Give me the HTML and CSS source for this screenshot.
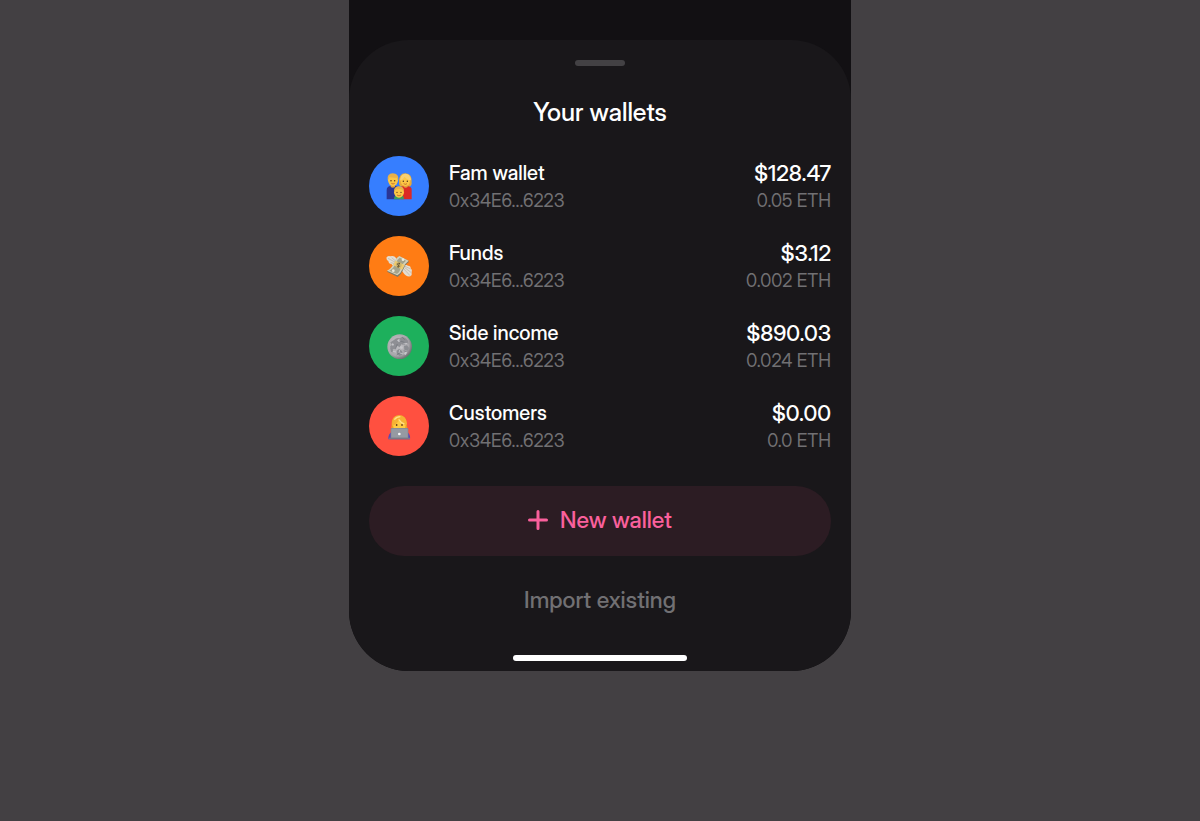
FILE: index.html
```html
<!DOCTYPE html>
<html lang="en">
<head>
    <meta charset="UTF-8">
    <meta name="viewport" content="width=device-width, initial-scale=1.0">
    <title>Your wallets</title>
    <link rel="stylesheet" href="styles.css">
</head>

<body>

    <main class="phone">
        <section class="sheet">
            <div class="handle"></div>
            <h1>Your wallets</h1>

            <!-- Wallet list -->
            <ul class="wallets">
                <li class="wallet">
                    <!-- Family -->
                    <svg class="avatar blue" viewBox="15 17 180 180" aria-hidden="true">
                        <path d="M68 147v-28q0-11 12-12h14q12 1 12 12v28z" fill="#2b3594"/>
                        <path d="M106 147v-28q0-11 12-12h13q12 1 12 12v28z" fill="#dc2a24"/>
                        <path d="M80 100h13v10q-6 5-13 0zM119 100h12v10q-6 5-12 0z" fill="#e5a23a"/>
                        <path d="M105 98q-2-29 19-29 22 0 19 32-2 9-9 7h-19q-10 1-10-10z" fill="#e6a93a"/>
                        <ellipse cx="87" cy="90" rx="15" ry="17" fill="#fcc646"/>
                        <ellipse cx="124" cy="92" rx="14" ry="15" fill="#fcc646"/>
                        <path d="M71 90q-3-20 15-21 19 0 17 21-3-3-4-8-12 1-23-1-3 4-5 9z" fill="#e8b04a"/>
                        <path d="M108 91q1-21 16-21 16 0 17 20-12-1-19-11-4 9-14 12z" fill="#f7d074"/>
                        <g fill="#51321b">
                            <circle cx="81" cy="91" r="2.2"/>
                            <circle cx="92" cy="91" r="2.2"/>
                            <circle cx="118" cy="93" r="2.2"/>
                            <circle cx="130" cy="93" r="2.2"/>
                        </g>
                        <path d="M82 99q5 4 10 0M119 100q5 4 10 0" fill="none" stroke="#b04b26" stroke-width="2"/>
                        <path d="M90 147q0-12 9-12h13q8 1 8 12z" fill="#3d9b62"/>
                        <ellipse cx="105" cy="126" rx="15" ry="16" fill="#fcc646"/>
                        <path d="M90 122q0-14 15-14t15 14q-7-6-15-6t-15 6z" fill="#e8b04a"/>
                        <g fill="#51321b">
                            <circle cx="99" cy="126" r="2"/>
                            <circle cx="111" cy="126" r="2"/>
                        </g>
                        <path d="M99 134q6 5 12 0" fill="none" stroke="#b04b26" stroke-width="2"/>
                    </svg>
                    <div class="details">
                        <span class="name">Fam wallet</span>
                        <span class="sub">0x34E6...6223</span>
                    </div>
                    <div class="details balance">
                        <span class="amount">$128.47</span>
                        <span class="sub">0.05 ETH</span>
                    </div>
                </li>
                <li class="wallet">
                    <!-- Money with wings -->
                    <svg class="avatar orange" viewBox="15 17 180 180" aria-hidden="true">
                        <path d="M67 82q4-7 12-4 11-4 17 5l9 13-8 11q-11 2-15-6-8 0-9-9-6-3-6-10z" fill="#e3ddd2"/>
                        <path d="M112 105q13-4 20 1 9 1 8 8 6 5 3 12 2 8-4 12-13 2-20-9l-9-14z" fill="#e3ddd2"/>
                        <path d="M72 84l22 12M80 97l13 3M83 82l14 12M116 112l22 24M121 111l21 16M123 108l17 8" stroke="#b9b0a3" stroke-width="2" fill="none"/>
                        <path d="M69 124q13-6 20-22 6-17 17-24l28 13v5q-11 7-17 23-5 13-16 21z" fill="#7e7b68"/>
                        <path d="M69 121q13-6 20-21 6-17 17-23l28 14q-12 8-18 24-5 13-16 20z" fill="#d6d2bc"/>
                        <path d="M76 121q12-6 18-21 5-12 13-18l19 9q-10 7-15 22-4 12-12 18z" fill="#a5a48b"/>
                        <path d="M88 104q4-7 6-13l28 13q-5 7-7 14z" fill="#f0cc70"/>
                        <circle cx="104" cy="104" r="9" fill="#cfb66c"/>
                        <path d="M108 100q-7-4-8 1-1 3 4 4 4 2 1 5-3 2-6-2M107 97l-5 14" fill="none" stroke="#51452e" stroke-width="2"/>
                        <circle cx="117" cy="88" r="4" fill="#eeeada"/>
                        <circle cx="88" cy="121" r="4" fill="#eeeada"/>
                    </svg>
                    <div class="details">
                        <span class="name">Funds</span>
                        <span class="sub">0x34E6...6223</span>
                    </div>
                    <div class="details balance">
                        <span class="amount">$3.12</span>
                        <span class="sub">0.002 ETH</span>
                    </div>
                </li>
                <li class="wallet">
                    <!-- Full moon -->
                    <svg class="avatar green" viewBox="15 17 180 180" aria-hidden="true">
                        <defs>
                            <radialGradient id="moon" cx="0.4" cy="0.4" r="0.62">
                                <stop offset="0" stop-color="#c4c3c7"/>
                                <stop offset="0.75" stop-color="#a8a7ab"/>
                                <stop offset="1" stop-color="#707274"/>
                            </radialGradient>
                        </defs>
                        <circle cx="107" cy="109" r="37" fill="url(#moon)"/>
                        <path d="M90 89q8-9 17-5l8-5q12 3 17 12l2 9-9-2-3 7-10-3-4 8-9-3-6 9-9 1-6-8 5-6-4-7z" fill="#8e8f94"/>
                        <path d="M78 111l8 4 2 11-7-1zM98 121l7-5 9 6 2 10-9 5-8-6zM120 107l9-2 6 8-4 8-10-3z" fill="#8b8d92"/>
                        <path d="M99 90l6-4 5 5-5 5zM109 107l8 2-2 7-7-2zM84 99l6 2-2 5-5-1zM124 124l6 2-5 8-5-3z" fill="#c6c6ca"/>
                        <path d="M100 101l-6 16M106 91l15 5M98 134l9-7M119 121l8 3M115 81l7 7" stroke="#6e727a" stroke-width="2"/>
                        <path d="M105 128l2-9M108 128l10 3M86 123l10 2M118 101l12-2" stroke="#d2d2d6" stroke-width="2"/>
                    </svg>
                    <div class="details">
                        <span class="name">Side income</span>
                        <span class="sub">0x34E6...6223</span>
                    </div>
                    <div class="details balance">
                        <span class="amount">$890.03</span>
                        <span class="sub">0.024 ETH</span>
                    </div>
                </li>
                <li class="wallet">
                    <!-- Technologist -->
                    <svg class="avatar red" viewBox="15 17 180 180" aria-hidden="true">
                        <path d="M73 147q-1-17 11-23h44q12 6 10 23z" fill="#5948b8"/>
                        <path d="M81 116q2-9 2-18 1-22 23-23 20 1 22 21 0 13 3 20-8 6-17 4H93q-7 1-12-4z" fill="#ee9f25"/>
                        <ellipse cx="106" cy="104" rx="19" ry="20" fill="#ffcb42"/>
                        <path d="M84 107q-2-31 21-32 22 0 24 26l-4 4q-13-3-20-15-6 12-21 17z" fill="#f6b234"/>
                        <path d="M91 88q7-9 18-9M104 87q6 10 17 14" stroke="#ffe18a" stroke-width="4" fill="none"/>
                        <g fill="#61381c">
                            <ellipse cx="98" cy="104" rx="2.5" ry="3"/>
                            <ellipse cx="114" cy="104" rx="2.5" ry="3"/>
                        </g>
                        <path d="M83 113h47q3 0 3 4v26H80v-26q0-4 3-4z" fill="#858890"/>
                        <path d="M84 115h45q2 0 2 3v24H82v-24q0-3 2-3z" fill="#969aa2"/>
                        <path d="M75 142h63v3q0 2-3 2H78q-3 0-3-2z" fill="#777b86"/>
                        <circle cx="106" cy="131" r="4" fill="#f7f7f9"/>
                    </svg>
                    <div class="details">
                        <span class="name">Customers</span>
                        <span class="sub">0x34E6...6223</span>
                    </div>
                    <div class="details balance">
                        <span class="amount">$0.00</span>
                        <span class="sub">0.0 ETH</span>
                    </div>
                </li>
            </ul>

            <!-- Actions -->
            <button type="button" class="new-wallet">
                <svg class="plus" viewBox="0 0 20 20" aria-hidden="true">
                    <path d="M10 1.5v17M1.5 10h17"/>
                </svg>
                New wallet
            </button>
            <button type="button" class="import">Import existing</button>

            <div class="home-indicator"></div>
        </section>
    </main>

</body>
</html>
```
FILE: styles.css
```css
/* Global Styles */
* {
    margin: 0;
    padding: 0;
    box-sizing: border-box;
}

body {
    font-family: 'Inter Display', 'Inter', sans-serif;
    font-variation-settings: "opsz" 32;
    background-color: #434043;
    color: #fff;
}

/* Phone and bottom sheet */
.phone {
    width: 100%;
    max-width: 502px;
    margin: 0 auto;
    padding-top: 40px;
    background: #121013;
    border-radius: 0 0 60px 60px;
    overflow: hidden;
}

.sheet {
    display: flex;
    flex-direction: column;
    padding: 20px 20px 10px;
    background: #19171a;
    border-radius: 60px 60px 0 0;
}

.handle {
    width: 50px;
    height: 6px;
    align-self: center;
    background: #434144;
    border-radius: 3px;
}

h1 {
    margin: 30px 0 28px;
    font-size: 25px;
    font-weight: 500;
    line-height: 32px;
    text-align: center;
}

/* Wallet list */
.wallets {
    display: flex;
    flex-direction: column;
    gap: 20px;
    list-style: none;
}

.wallet {
    display: flex;
    align-items: center;
    gap: 20px;
}

.avatar {
    width: 60px;
    height: 60px;
    flex-shrink: 0;
    border-radius: 50%;
}

.blue {
    background: #367eff;
}

.orange {
    background: #ff7c14;
}

.green {
    background: #1db05c;
}

.red {
    background: #ff5040;
}

.details {
    display: flex;
    flex-direction: column;
    padding-top: 2px;
    line-height: 28px;
}

.balance {
    margin-left: auto;
    text-align: right;
}

.name {
    font-size: 20px;
    font-weight: 500;
}

.amount {
    font-size: 22px;
    font-weight: 500;
}

.sub {
    font-size: 18px;
    font-weight: 400;
    color: #717073;
}

/* Buttons */
button {
    font-family: inherit;
    font-variation-settings: inherit;
    font-size: 23px;
    font-weight: 500;
    border: none;
    cursor: pointer;
}

.new-wallet {
    display: flex;
    align-items: center;
    justify-content: center;
    gap: 12px;
    height: 70px;
    margin-top: 30px;
    padding-bottom: 2px;
    background: #2c1c23;
    color: #fa609c;
    border-radius: 35px;
}

.plus {
    width: 20px;
    height: 20px;
    fill: none;
    stroke: currentColor;
    stroke-width: 3;
    stroke-linecap: round;
}

.import {
    height: 50px;
    margin-top: 19px;
    background: none;
    color: #717073;
}

.home-indicator {
    width: 174px;
    height: 6px;
    margin-top: 30px;
    align-self: center;
    background: #fff;
    border-radius: 3px;
}
```
